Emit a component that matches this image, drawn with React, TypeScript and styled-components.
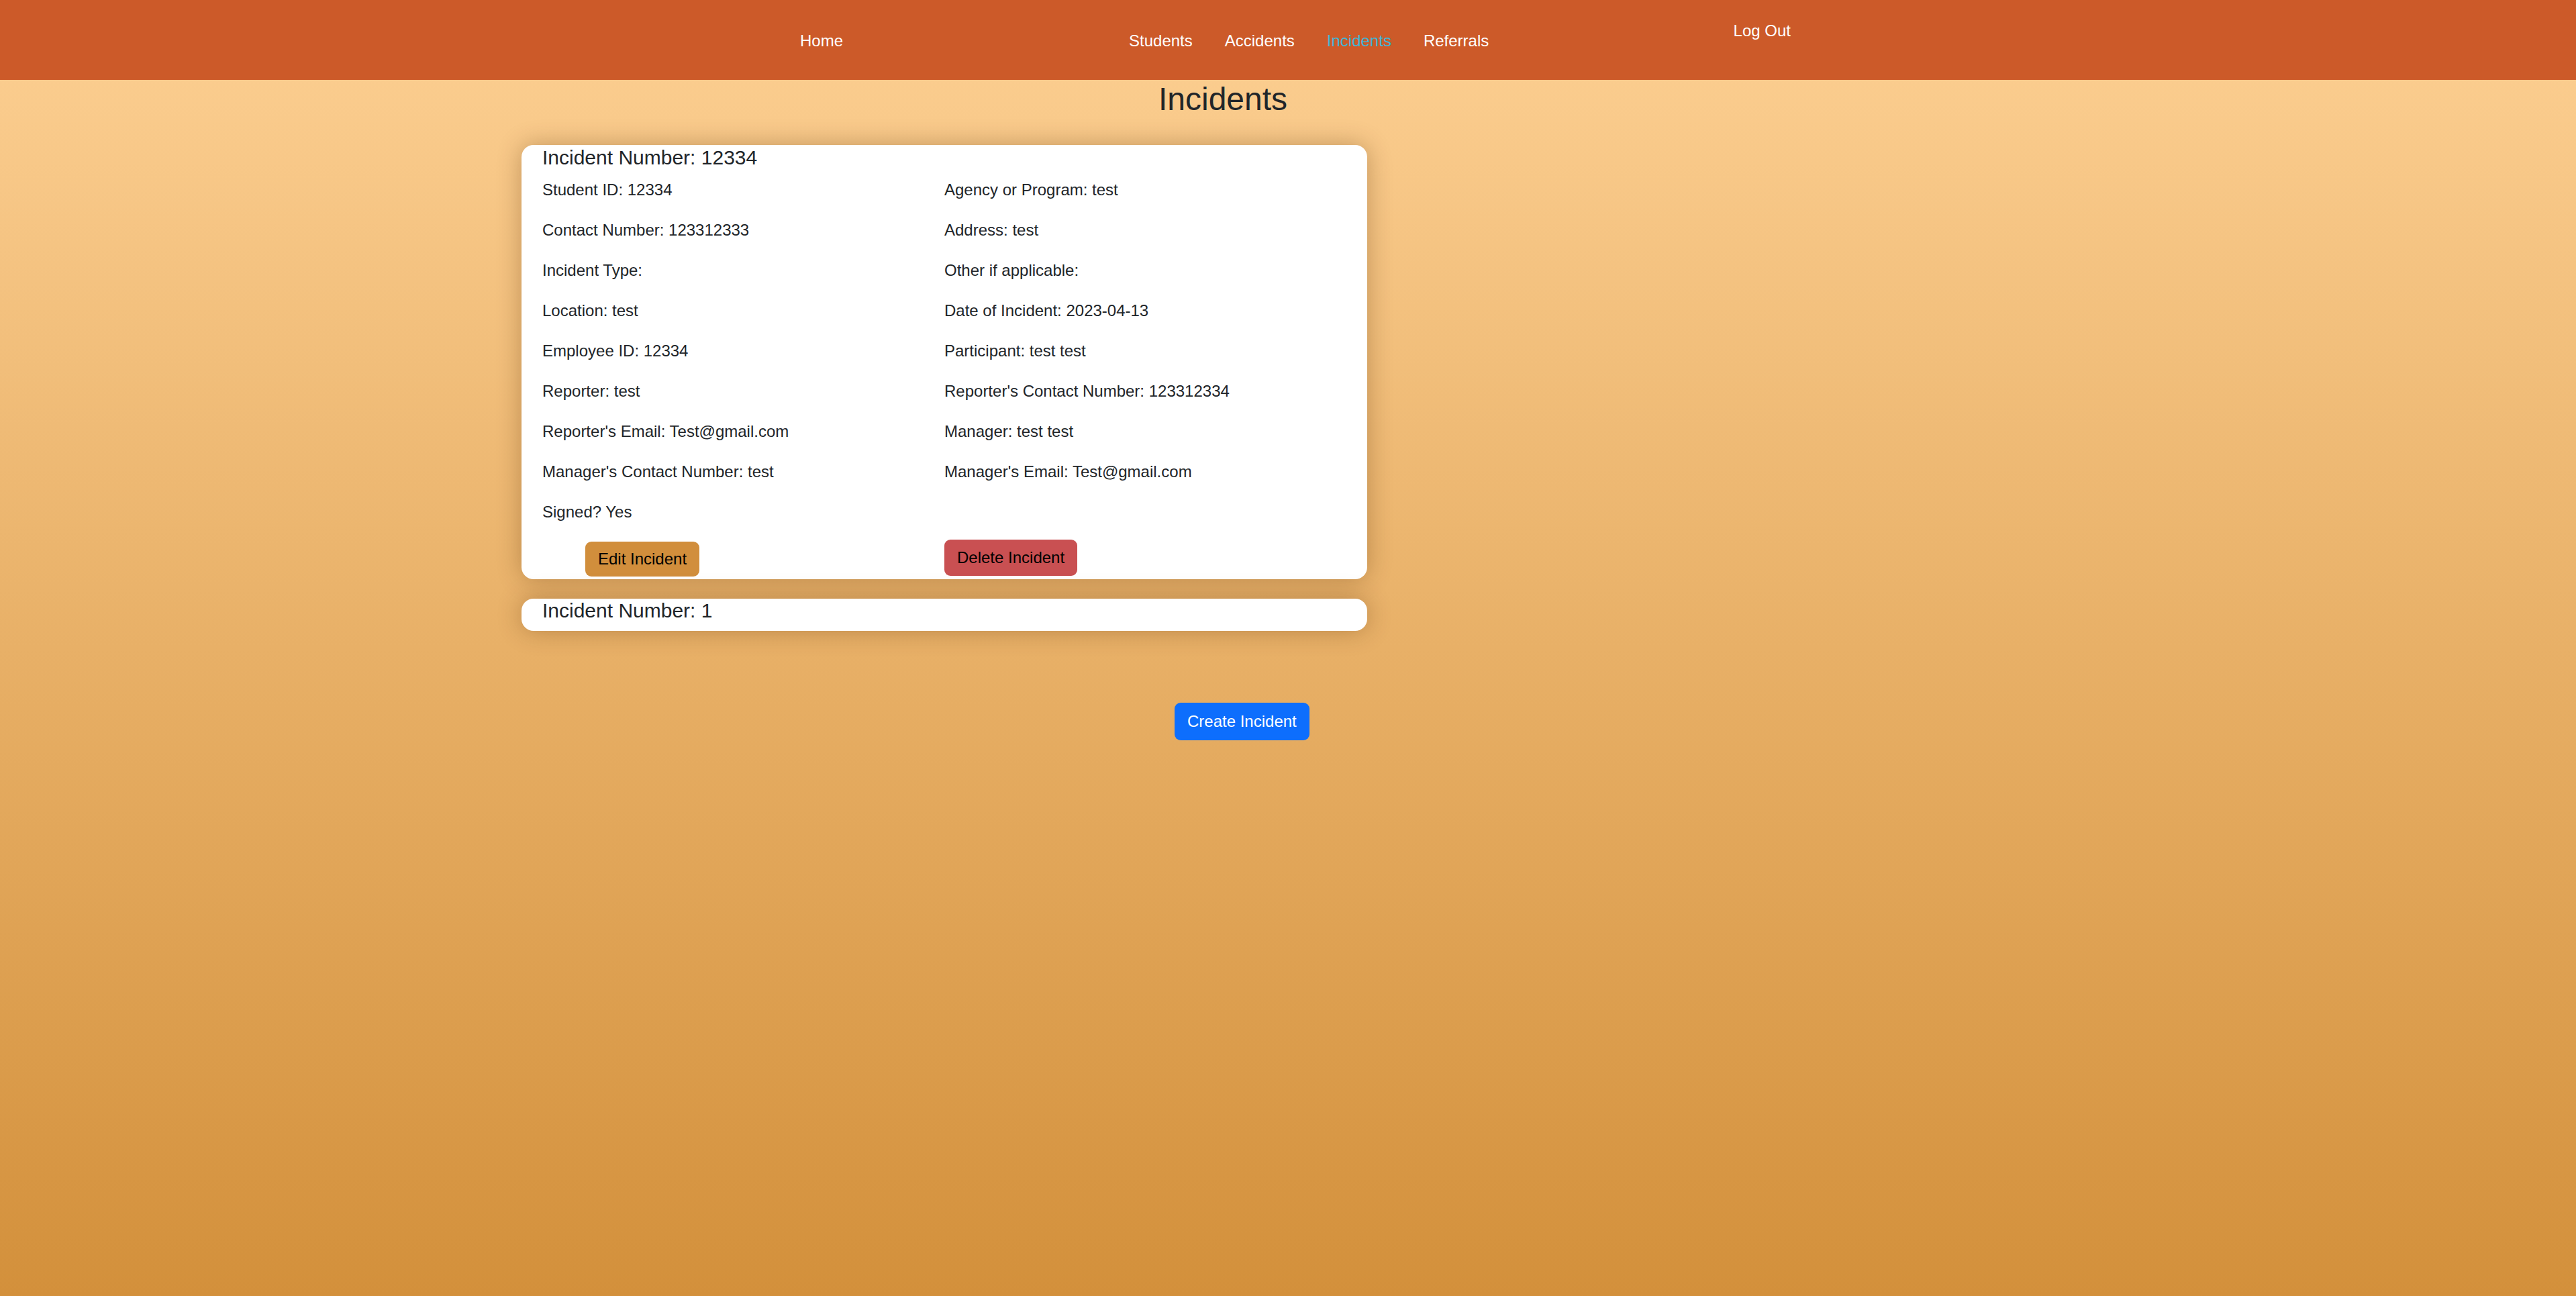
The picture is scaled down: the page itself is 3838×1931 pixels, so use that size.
import React from "react";
import styled, { createGlobalStyle } from "styled-components";

const GlobalStyle = createGlobalStyle`
  html, body {
    margin: 0;
    padding: 0;
  }
  body {
    font-family: "Liberation Sans", Arial, sans-serif;
    color: #212529;
  }
  * { box-sizing: border-box; }
`;

const Page = styled.div`
  min-height: 100vh;
  display: flex;
  flex-direction: column;
  background: linear-gradient(to bottom, #fdd093 0%, #d3903b 100%);
`;

const NavBar = styled.nav`
  height: 119px;
  background: #cc5a29;
  display: flex;
`;

const NavInner = styled.div`
  display: flex;
  align-items: center;
  width: 1476px;
  margin-left: calc(50% - 727px);
  padding-top: 3px;
`;

const NavLink = styled.a<{ $active?: boolean }>`
  font-size: 24px;
  line-height: 36px;
  color: ${(p) => (p.$active ? "#3fb6d8" : "#ffffff")};
  text-decoration: none;
  white-space: nowrap;
`;

const NavGroup = styled.div`
  display: flex;
  gap: 48px;
  margin-left: 426px;
`;

const LogOut = styled(NavLink)`
  margin-left: auto;
  align-self: flex-start;
  margin-top: 25px;
`;

const Main = styled.main`
  width: 2090px;
  margin-left: calc(50% - 1142px);
  display: flex;
  flex-direction: column;
`;

const Title = styled.h1`
  margin: 0 0 12px;
  font-size: 48px;
  line-height: 1.2;
  font-weight: 400;
  text-align: center;
  color: #212529;
`;

const CardList = styled.div`
  display: flex;
  flex-direction: column;
  gap: 29px;
  padding-top: 27px;
  width: 1260px;
`;

const Card = styled.section<{ $padTop: number; $padBottom: number }>`
  background: #ffffff;
  border-radius: 18px;
  box-shadow: 0 0 36px rgba(80, 40, 0, 0.32);
  padding: ${(p) => p.$padTop}px 31px ${(p) => p.$padBottom}px;
`;

const CardTitle = styled.h5`
  margin: 0 0 12px;
  font-size: 30px;
  line-height: 36px;
  font-weight: 400;
  color: #212529;
`;

const FieldGrid = styled.div`
  display: grid;
  grid-template-columns: 1fr 1fr;
`;

const Field = styled.p`
  margin: 0 0 24px;
  font-size: 24px;
  line-height: 36px;
  color: #212529;
  white-space: nowrap;
`;

const ButtonRow = styled.div`
  display: grid;
  grid-template-columns: 1fr 1fr;
  align-items: start;
`;

const Btn = styled.button<{ $bg: string; $fg: string; $pad: number; $offsetX?: number; $offsetY?: number }>`
  justify-self: start;
  font-family: "Liberation Sans", Arial, sans-serif;
  font-size: 24px;
  line-height: 36px;
  padding: ${(p) => p.$pad}px 18px;
  border: 1px solid transparent;
  border-radius: 9px;
  background: ${(p) => p.$bg};
  color: ${(p) => p.$fg};
  margin-left: ${(p) => p.$offsetX ?? 0}px;
  margin-top: ${(p) => p.$offsetY ?? 0}px;
  cursor: pointer;
  white-space: nowrap;
`;

const CreateRow = styled.div`
  display: flex;
  margin-top: 107px;
  padding-left: 973px;
`;

const rows: [string, string | null][] = [
  ["Student ID: 12334", "Agency or Program: test"],
  ["Contact Number: 123312333", "Address: test"],
  ["Incident Type:", "Other if applicable:"],
  ["Location: test", "Date of Incident: 2023-04-13"],
  ["Employee ID: 12334", "Participant: test test"],
  ["Reporter: test", "Reporter's Contact Number: 123312334"],
  ["Reporter's Email: Test@gmail.com", "Manager: test test"],
  ["Manager's Contact Number: test", "Manager's Email: Test@gmail.com"],
  ["Signed? Yes", null],
];

export default function App() {
  return (
    <>
      <GlobalStyle />
      <Page>
        <NavBar>
          <NavInner>
            <NavLink href="#">Home</NavLink>
            <NavGroup>
              <NavLink href="#">Students</NavLink>
              <NavLink href="#">Accidents</NavLink>
              <NavLink href="#" $active>
                Incidents
              </NavLink>
              <NavLink href="#">Referrals</NavLink>
            </NavGroup>
            <LogOut href="#">Log Out</LogOut>
          </NavInner>
        </NavBar>
        <Main>
          <Title>Incidents</Title>
          <CardList>
            <Card $padTop={1} $padBottom={4}>
              <CardTitle>Incident Number: 12334</CardTitle>
              <FieldGrid>
                {rows.map(([l, r], i) => (
                  <React.Fragment key={i}>
                    <Field>{l}</Field>
                    {r !== null ? <Field>{r}</Field> : <div />}
                  </React.Fragment>
                ))}
              </FieldGrid>
              <ButtonRow>
                <Btn $bg="#d18e3c" $fg="#000" $pad={7} $offsetX={64} $offsetY={2}>
                  Edit Incident
                </Btn>
                <Btn $bg="#c95052" $fg="#000" $pad={8} $offsetY={-1}>
                  Delete Incident
                </Btn>
              </ButtonRow>
            </Card>
            <Card $padTop={0} $padBottom={0}>
              <CardTitle>Incident Number: 1</CardTitle>
            </Card>
          </CardList>
          <CreateRow>
            <Btn $bg="#0d6efd" $fg="#ffffff" $pad={9}>
              Create Incident
            </Btn>
          </CreateRow>
        </Main>
      </Page>
    </>
  );
}
